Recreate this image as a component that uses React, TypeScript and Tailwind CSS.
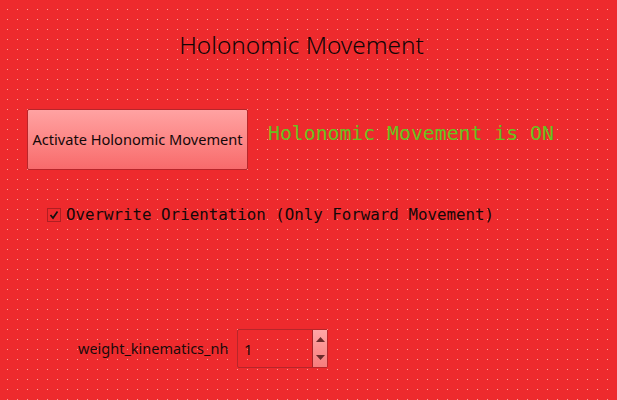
import React from "react";

export default function App() {
  return (
    <div
      className="relative w-[617px] h-[400px] overflow-hidden bg-[#ee2a2d] bg-[image:radial-gradient(circle_at_7.5px_9.5px,#f5a79c_0.6px,transparent_0.9px)] bg-[size:10px_10px]"
      style={{ fontFamily: '"Noto Sans", "Open Sans", sans-serif' }}
    >
      <div className="flex flex-col">
        <div className="mt-[29px] h-[32px] flex justify-center">
          <span className="text-[24.4px] leading-[32px] font-light text-[#120606] mr-[14px]">
            Holonomic Movement
          </span>
        </div>

        <div className="mt-[48px] flex items-start pl-[27px]">
          <button className="w-[221px] h-[61px] rounded-[2px] border border-[#b8262a] bg-gradient-to-b from-[#ffa2a2] to-[#f86a6b] text-[14.6px] text-[#140808] flex items-center justify-center whitespace-nowrap">
            Activate Holonomic Movement
          </button>
          <span
            className="ml-[20px] mt-[13px] text-[19.8px] leading-[24px] text-[#68c21e]"
            style={{ fontFamily: '"DejaVu Sans Mono", monospace' }}
          >
            Holonomic Movement is ON
          </span>
        </div>

        <div className="mt-[36px] flex items-center pl-[47px] h-[18px]">
          <div className="w-[14px] h-[14px] border border-[#b01e22] bg-[#ee2a2d] flex items-center justify-center">
            <svg width="10" height="10" viewBox="0 0 10 10">
              <path d="M1.5 5 L4 8 L8.5 1.5" stroke="#111" strokeWidth="1.7" fill="none" />
            </svg>
          </div>
          <span
            className="ml-[5px] text-[15.8px] leading-[18px] text-[#140808]"
            style={{ fontFamily: '"DejaVu Sans Mono", monospace' }}
          >
            Overwrite Orientation (Only Forward Movement)
          </span>
        </div>

        <div className="mt-[105px] flex items-center pl-[78px]">
          <span className="w-[159px] text-[14.5px] text-[#1a0a0a] whitespace-nowrap">weight_kinematics_nh</span>
          <div className="w-[91px] h-[39px] flex border border-[#b8262a] rounded-[2px]">
            <div className="flex-1 flex items-center pl-[6px] pt-[2px] text-[15px] text-[#1a0a0a] border-r border-[#a82226]">
              1
            </div>
            <div className="w-[14px] flex flex-col bg-gradient-to-b from-[#ffa6a6] to-[#f67c7c]">
              <div className="flex-1 flex items-center justify-center">
                <svg width="9" height="5" viewBox="0 0 9 5">
                  <path d="M0 5 L4.5 0 L9 5 Z" fill="#6a2a2a" />
                </svg>
              </div>
              <div className="flex-1 flex items-center justify-center">
                <svg width="9" height="5" viewBox="0 0 9 5">
                  <path d="M0 0 L4.5 5 L9 0 Z" fill="#6a2a2a" />
                </svg>
              </div>
            </div>
          </div>
        </div>
      </div>
    </div>
  );
}
